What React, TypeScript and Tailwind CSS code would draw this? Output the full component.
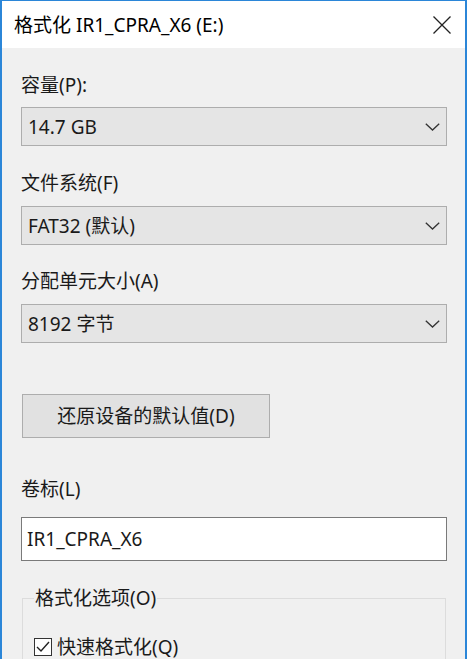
import { ReactNode } from "react"

const font = { fontFamily: '"Noto Sans", "Noto Sans CJK SC", sans-serif' }

function Chevron() {
  return (
    <svg width="15" height="8" viewBox="0 0 15 8" className="shrink-0">
      <path d="M0.8 0.8 L7.5 7 L14.2 0.8" fill="none" stroke="#333" strokeWidth="1.3" />
    </svg>
  )
}

function Label({ children, className = "" }: { children: ReactNode; className?: string }) {
  return <div className={"h-[28px] leading-[28px] text-[19px] text-[#1a1a1a] " + className}>{children}</div>
}

function Combo({ value, className = "" }: { value: string; className?: string }) {
  return (
    <div
      className={
        "w-[426px] h-[39px] border border-[#adadad] bg-[#e5e5e5] flex items-center justify-between pl-[6px] pr-[6px] " +
        className
      }
    >
      <span className="text-[19px] leading-[28px] text-[#1a1a1a]">{value}</span>
      <Chevron />
    </div>
  )
}

function App() {
  return (
    <div className="w-[468px] h-[659px] bg-white overflow-hidden" style={font}>
      <div className="w-[467px] h-full border-x-2 border-t border-[#2b86d8] bg-[#f0f0f0] flex flex-col">
        {/* title bar */}
        <div className="h-[47px] bg-white flex items-center justify-between pl-[12px] pr-[14px] shrink-0">
          <span className="text-[19px] leading-[28px] text-black">格式化 IR1_CPRA_X6 (E:)</span>
          <svg width="18" height="18" viewBox="0 0 18 18">
            <path d="M0.5 0.5 L17.5 17.5 M17.5 0.5 L0.5 17.5" stroke="#222" strokeWidth="1.3" />
          </svg>
        </div>

        <div className="flex flex-col pl-[19px]">
          <Label className="mt-[23px]">容量(P):</Label>
          <Combo value="14.7 GB" className="mt-[8px]" />

          <Label className="mt-[23px]">文件系统(F)</Label>
          <Combo value="FAT32 (默认)" className="mt-[9px]" />

          <Label className="mt-[22px]">分配单元大小(A)</Label>
          <Combo value="8192 字节" className="mt-[9px]" />

          <button className="mt-[51px] ml-[1px] w-[248px] h-[44px] border border-[#adadad] bg-[#e1e1e1] text-[19px] leading-[28px] text-[#1a1a1a]">
            还原设备的默认值(D)
          </button>

          <Label className="mt-[37px]">卷标(L)</Label>
          <div className="mt-[14px] w-[426px] h-[44px] border border-[#7a7a7a] bg-white flex items-center pl-[5px]">
            <span className="text-[19px] leading-[28px] text-[#1a1a1a]">IR1_CPRA_X6</span>
          </div>

          <fieldset className="mt-[23px] ml-[1px] w-[424px] h-[120px] border border-[#dcdcdc] pl-[11px]">
            <legend className="px-[1px] h-[28px] leading-[28px] text-[19px] text-[#1a1a1a]">格式化选项(O)</legend>
            <div className="mt-[21px] flex items-center gap-[5px]">
              <div className="w-[18px] h-[18px] border border-[#333] bg-white flex items-center justify-center">
                <svg width="14" height="12" viewBox="0 0 14 12">
                  <path d="M1 6 L5 10 L13 1" fill="none" stroke="#222" strokeWidth="1.4" />
                </svg>
              </div>
              <span className="text-[19px] leading-[28px] text-[#1a1a1a]">快速格式化(Q)</span>
            </div>
          </fieldset>
        </div>
      </div>
    </div>
  )
}

export default App
